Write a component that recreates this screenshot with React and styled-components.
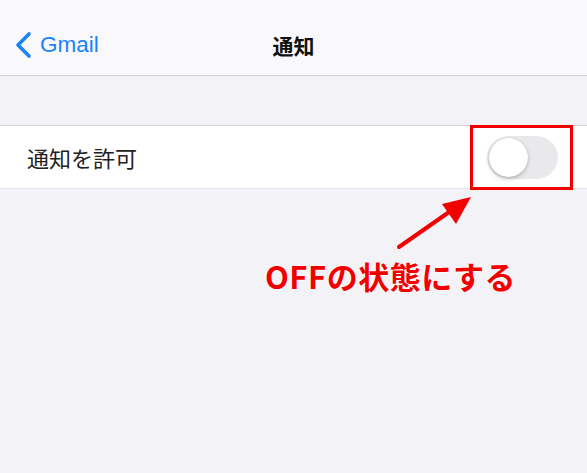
import React from 'react'
import styled, { createGlobalStyle } from 'styled-components'

const GlobalStyle = createGlobalStyle`
  html, body {
    margin: 0;
    padding: 0;
    background: #f2f2f7;
    font-family: "Noto Sans CJK JP", "Noto Sans", sans-serif;
  }
`

const Screen = styled.div`
  position: relative;
  width: 587px;
  height: 473px;
  overflow: hidden;
  background: #f2f2f7;
`

const NavBar = styled.div`
  display: grid;
  grid-template-columns: 1fr auto 1fr;
  align-items: center;
  height: 76px;
  padding: 0 14px;
  box-sizing: border-box;
  background: #f9f9fb;
  border-bottom: 1px solid #cfcfd3;
`

const BackButton = styled.div`
  display: flex;
  align-items: center;
  gap: 6px;
  color: #1a82fb;
  font-family: "Liberation Sans", "Noto Sans", sans-serif;
  font-size: 22.5px;
  padding-top: 14px;
`

const Title = styled.div`
  font-size: 21px;
  font-weight: 700;
  color: #111;
  padding-top: 14px;
`

const Spacer = styled.div`
  height: 49px;
  border-bottom: 1px solid #d4d4d8;
`

const Row = styled.div`
  display: flex;
  align-items: center;
  justify-content: space-between;
  height: 62px;
  padding: 0 29px 0 27px;
  background: #fff;
  border-bottom: 1px solid #e6e6ea;
`

const Label = styled.div`
  font-size: 22px;
  color: #222;
`

const Toggle = styled.div`
  position: relative;
  width: 71px;
  height: 43px;
  border-radius: 22px;
  background: #e9e9ec;
`

const Knob = styled.div`
  position: absolute;
  left: 2px;
  top: 2px;
  width: 39px;
  height: 39px;
  border-radius: 50%;
  background: #fff;
  box-shadow: 0 2px 4px rgba(0, 0, 0, 0.22), 0 0 1px rgba(0, 0, 0, 0.2);
`

const Highlight = styled.div`
  position: absolute;
  left: 470px;
  top: 125px;
  width: 103px;
  height: 65px;
  box-sizing: border-box;
  border: 3px solid #f20000;
`

const Arrow = styled.svg`
  position: absolute;
  left: 0;
  top: 0;
`

const Caption = styled.div`
  position: absolute;
  left: 265px;
  top: 253px;
  font-size: 31px;
  font-weight: 700;
  color: #f20000;
  letter-spacing: 0.5px;
  text-shadow: 0 0 2px #fff, 0 0 2px #fff, 0 0 2px #fff;
`

export default function App() {
  return (
    <>
      <GlobalStyle />
      <Screen>
        <NavBar>
          <BackButton>
            <svg width="20" height="28" viewBox="0 0 20 28">
              <path d="M15 3 L4 14 L15 25" fill="none" stroke="#1a82fb" strokeWidth="3.6" strokeLinecap="round" strokeLinejoin="round" />
            </svg>
            Gmail
          </BackButton>
          <Title>通知</Title>
          <div />
        </NavBar>
        <Spacer />
        <Row>
          <Label>通知を許可</Label>
          <Toggle>
            <Knob />
          </Toggle>
        </Row>
        <Highlight />
        <Arrow width="587" height="473">
          <line x1="399" y1="247" x2="452" y2="210" stroke="#f20000" strokeWidth="4" strokeLinecap="round" />
          <polygon points="471,197 442,204 456,224" fill="#f20000" />
        </Arrow>
        <Caption>OFFの状態にする</Caption>
      </Screen>
    </>
  )
}
